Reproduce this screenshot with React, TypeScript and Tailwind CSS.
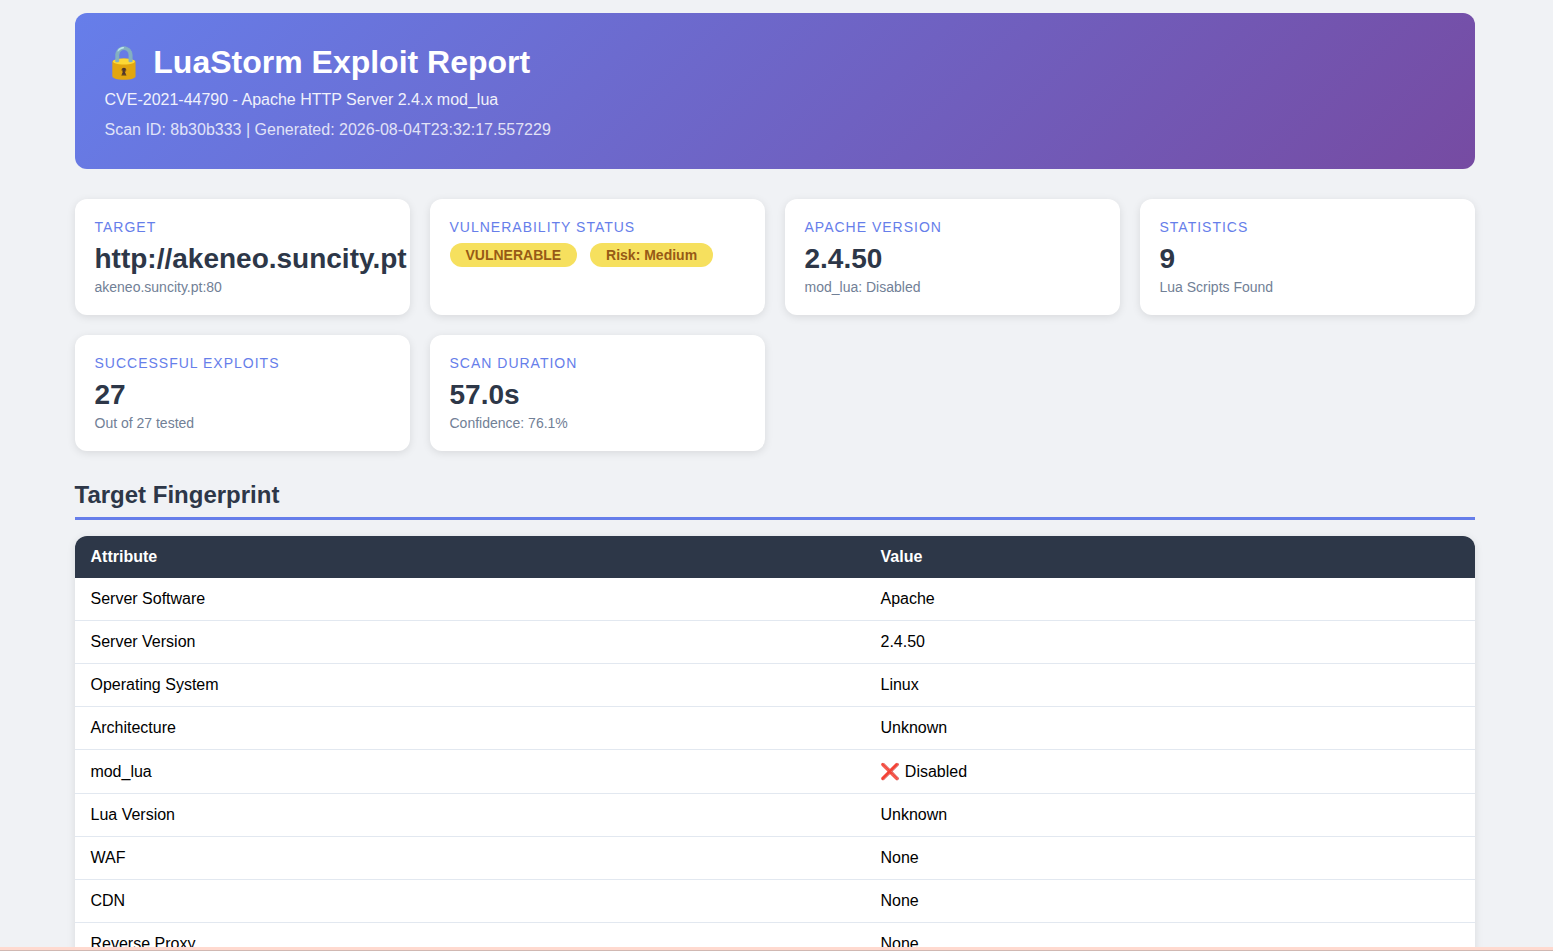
import type { ReactNode } from 'react';

type CardProps = { label: string; value?: string; note?: string; children?: ReactNode };

function Card({ label, value, note, children }: CardProps) {
  return (
    <div className="h-[116px] min-w-0 rounded-xl bg-white p-5 shadow-[0_2px_8px_rgba(0,0,0,0.1)]">
      <h3 className="mb-2 text-[14px] leading-4 tracking-[1px] text-[#667eea] uppercase">{label}</h3>
      {value && <div className="text-[28px] leading-8 font-bold whitespace-nowrap text-[#2d3748]">{value}</div>}
      {note && <div className="mt-1 text-[14px] leading-4 text-[#718096]">{note}</div>}
      {children}
    </div>
  );
}

function Badge({ children }: { children: ReactNode }) {
  return (
    <span className="h-6 rounded-full bg-[#f6e05e] px-4 text-[14px] leading-6 font-bold text-[#975a16]">{children}</span>
  );
}

const rows = [
  ['Server Software', 'Apache'],
  ['Server Version', '2.4.50'],
  ['Operating System', 'Linux'],
  ['Architecture', 'Unknown'],
  ['mod_lua', '❌ Disabled'],
  ['Lua Version', 'Unknown'],
  ['WAF', 'None'],
  ['CDN', 'None'],
  ['Reverse Proxy', 'None'],
];

export default function App() {
  return (
    <div className="relative h-[951px] overflow-hidden bg-[#f0f2f5] font-['Liberation_Sans',Arial,sans-serif] text-black">
      <main className="ml-[74.5px] w-[1400px] pt-[13px]">
        <header className="mb-[30px] h-[156px] rounded-xl bg-[linear-gradient(135deg,#667eea_0%,#764ba2_100%)] p-[30px] text-white">
          <h1 className="mb-[11px] -ml-[0.1px] h-[37px] text-[32px] leading-[38px] font-bold">
            🔒 LuaStorm Exploit Report
          </h1>
          <p className="text-[16px] leading-[18px] opacity-90">CVE-2021-44790 - Apache HTTP Server 2.4.x mod_lua</p>
          <p className="mt-3 text-[16px] leading-[18px] opacity-80">
            Scan ID: 8b30b333 | Generated: 2026-08-04T23:32:17.557229
          </p>
        </header>

        <section className="grid grid-cols-4 gap-5">
          <Card label="Target" value="http://akeneo.suncity.pt" note="akeneo.suncity.pt:80" />
          <Card label="Vulnerability Status">
            <div className="flex gap-[12.9px]">
              <Badge>VULNERABLE</Badge>
              <Badge>Risk: Medium</Badge>
            </div>
          </Card>
          <Card label="Apache Version" value="2.4.50" note="mod_lua: Disabled" />
          <Card label="Statistics" value="9" note="Lua Scripts Found" />
          <Card label="Successful Exploits" value="27" note="Out of 27 tested" />
          <Card label="Scan Duration" value="57.0s" note="Confidence: 76.1%" />
        </section>

        <h2 className="mt-[30px] mb-4 border-b-[3px] border-[#667eea] pb-2 text-[24px] leading-7 font-bold text-[#2d3748]">
          Target Fingerprint
        </h2>

        <div className="overflow-hidden rounded-xl bg-white shadow-[0_2px_8px_rgba(0,0,0,0.1)]">
          <table className="w-full table-fixed border-collapse text-left text-[16px] leading-[18px]">
            <colgroup>
              <col className="w-[790px]" />
              <col />
            </colgroup>
            <thead className="bg-[#2d3748] text-white">
              <tr>
                <th className="px-4 py-3 font-bold">Attribute</th>
                <th className="px-4 py-3 font-bold">Value</th>
              </tr>
            </thead>
            <tbody>
              {rows.map(([name, value]) => {
                const padding = name === 'mod_lua' ? 'pr-4 pl-[15.9px] pt-[13px] pb-3' : 'px-4 py-3';
                return (
                  <tr key={name} className="border-b border-[#e2e8f0]">
                    <td className={padding}>{name}</td>
                    <td className={padding}>{value}</td>
                  </tr>
                );
              })}
            </tbody>
          </table>
        </div>
      </main>
      <div className="absolute inset-x-0 bottom-0 h-1 border-b border-[#d0b8b2] bg-[#ffd9cf]" />
    </div>
  );
}
